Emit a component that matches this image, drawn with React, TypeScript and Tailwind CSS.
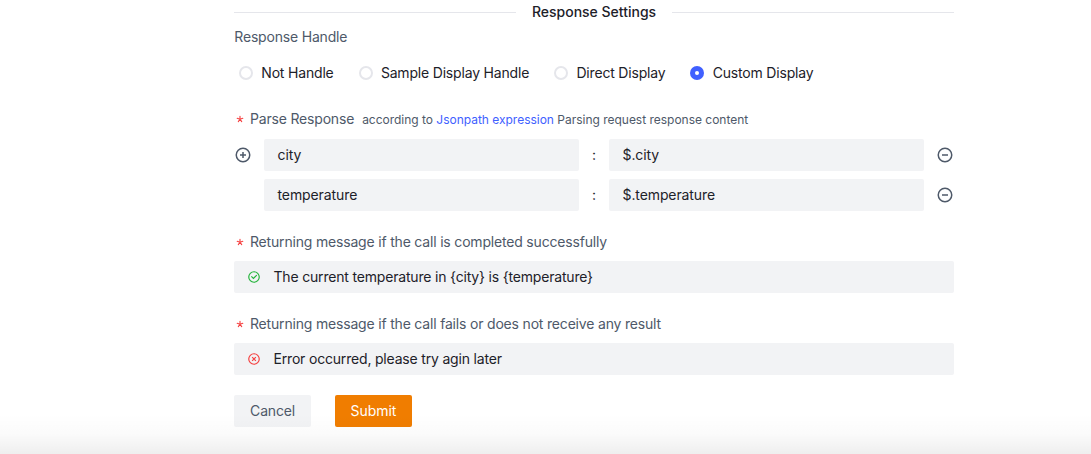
import React from 'react';

const RING = 'M42 24c0 9.941-8.059 18-18 18S6 33.941 6 24 14.059 6 24 6s18 8.059 18 18Z';

function CircleIcon({ d, size, className = '' }: { d: string; size: number; className?: string }) {
  return (
    <svg
      width={size}
      height={size}
      viewBox="0 0 48 48"
      fill="none"
      stroke="currentColor"
      strokeWidth={4}
      className={`shrink-0 ${className}`}
    >
      <path d={RING} />
      <path d={d} />
    </svg>
  );
}

function Required() {
  return (
    <svg width="6" height="6" viewBox="0 0 6 6" fill="none" stroke="#f53f3f" strokeWidth={1.1} strokeLinecap="round" className="mr-[7px] ml-[3px] shrink-0 overflow-visible">
      <path d="M3 3.2V.3M3 3.2.2 2.3M3 3.2l2.8-.9M3 3.2 1.3 5.6M3 3.2l1.7 2.4" />
    </svg>
  );
}

function Radio({ label, checked = false }: { label: string; checked?: boolean }) {
  return (
    <label className="mr-5 flex items-center pl-[5px]">
      {checked ? (
        <span className="flex size-3.5 items-center justify-center rounded-full bg-[#4060ff]">
          <span className="size-1 rounded-full bg-white" />
        </span>
      ) : (
        <span className="size-3.5 rounded-full border-2 border-[#e5e6eb] bg-white" />
      )}
      <span className="ml-[8.3px]">{label}</span>
    </label>
  );
}

function Field({ children }: { children: React.ReactNode }) {
  return (
    <div className="flex h-8 w-[315px] items-center rounded-xs bg-[#f2f3f5] px-[13.5px] tracking-[-0.1px]">
      {children}
    </div>
  );
}

function PairRow({ name, path, first = false }: { name: string; path: string; first?: boolean }) {
  return (
    <div className="flex h-8 items-center">
      <div className="w-[30px] text-[#4e5969]">
        {first && <CircleIcon size={18} d="M32 24H16m8-8v16" />}
      </div>
      <Field>{name}</Field>
      <div className="w-[30px] text-center">:</div>
      <Field>{path}</Field>
      <CircleIcon size={18} d="M32 24H16" className="ml-3 text-[#4e5969]" />
    </div>
  );
}

function Message({ label, icon, children }: { label: string; icon: React.ReactNode; children: React.ReactNode }) {
  return (
    <div>
      <div className="flex h-[22px] items-center text-[#4e5969]">
        <Required />
        {label}
      </div>
      <div className="mt-2 flex h-8 items-center rounded-xs bg-[#f2f3f5] pl-[13px]">
        {icon}
        <span className="ml-[12.5px]">{children}</span>
      </div>
    </div>
  );
}

export default function App() {
  return (
    <div className="relative h-[454px] w-[1091px] overflow-hidden bg-white pl-[234px] font-['Inter',sans-serif] text-sm leading-[22px] tracking-[-0.185px] whitespace-nowrap text-[#1d2129]">
      <div className="flex w-[720px] flex-col pt-px">
        <div className="flex items-center gap-4">
          <div className="h-px flex-1 bg-[#e5e6eb]" />
          <span className="font-medium tracking-normal">Response Settings</span>
          <div className="h-px flex-1 bg-[#e5e6eb]" />
        </div>
        <div className="mt-[3px] pl-[0.3px] text-[#4e5969]">Response Handle</div>
        <div className="mt-[9px] flex h-8 items-center">
          <Radio label="Not Handle" />
          <Radio label="Sample Display Handle" />
          <Radio label="Direct Display" />
          <Radio label="Custom Display" checked />
        </div>
        <div className="mt-[19px] flex h-[22px] items-center text-[#4e5969]">
          <Required />
          Parse Response
          <span className="ml-2 pt-px text-xs tracking-[-0.015px]">
            according to <a className="text-[#4060ff]">Jsonpath expression</a> Parsing request response content
          </span>
        </div>
        <div className="mt-[9px] flex flex-col gap-2">
          <PairRow name="city" path="$.city" first />
          <PairRow name="temperature" path="$.temperature" />
        </div>
        <div className="mt-5 flex flex-col gap-5">
          <Message
            label="Returning message if the call is completed successfully"
            icon={<CircleIcon size={14} d="m15 22 7 7 11.5-11.5" className="text-[#23b43a]" />}
          >
            {'The current temperature in {city} is {temperature}'}
          </Message>
          <Message
            label="Returning message if the call fails or does not receive any result"
            icon={
              <CircleIcon size={14} d="m17.643 17.643 12.728 12.728m0-12.728L17.643 30.37" className="text-[#f53f3f]" />
            }
          >
            Error occurred, please try agin later
          </Message>
        </div>
        <div className="mt-5 flex gap-6">
          <button className="h-8 w-[77px] rounded-xs bg-[#f2f3f5] text-[#4e5969]">Cancel</button>
          <button className="h-8 w-[77px] rounded-xs bg-[#f07d00] tracking-[-0.05px] text-white">Submit</button>
        </div>
      </div>
      <div className="pointer-events-none absolute inset-x-0 bottom-0 h-10 bg-linear-to-b from-black/0 via-black/[0.018] to-black/[0.065]" />
    </div>
  );
}
